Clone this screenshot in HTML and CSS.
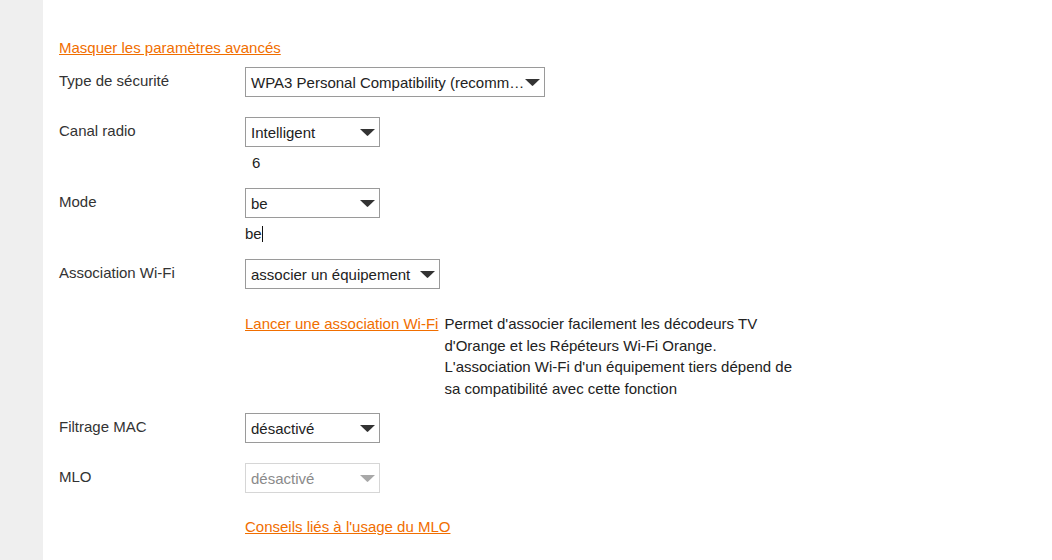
FILE: index.html
```html
<!DOCTYPE html>
<html lang="fr">
<head>
<meta charset="utf-8">
<title>Paramètres avancés</title>
<link rel="stylesheet" href="styles.css">
</head>
<body>
<div class="page">
  <aside class="side"></aside>
  <main class="content">
    <a class="link top-link" href="#">Masquer les paramètres avancés</a>

    <div class="row">
      <div class="label">Type de sécurité</div>
      <div class="ctrl">
        <div class="select w300"><span class="val">WPA3 Personal Compatibility (recomm…</span><svg class="arrow" viewBox="0 0 15 7"><path d="M0 0H15L8.2 6.6Q7.5 7.2 6.8 6.6Z"/></svg></div>
      </div>
    </div>

    <div class="row tight">
      <div class="label">Canal radio</div>
      <div class="ctrl">
        <div class="select w135"><span class="val">Intelligent</span><svg class="arrow" viewBox="0 0 15 7"><path d="M0 0H15L8.2 6.6Q7.5 7.2 6.8 6.6Z"/></svg></div>
        <div class="sub sub-indent">6</div>
      </div>
    </div>

    <div class="row tight">
      <div class="label">Mode</div>
      <div class="ctrl">
        <div class="select w135"><span class="val">be</span><svg class="arrow" viewBox="0 0 15 7"><path d="M0 0H15L8.2 6.6Q7.5 7.2 6.8 6.6Z"/></svg></div>
        <div class="sub">be<span class="caret"></span></div>
      </div>
    </div>

    <div class="row assoc">
      <div class="label">Association Wi-Fi</div>
      <div class="ctrl">
        <div class="select w195"><span class="val">associer un équipement</span><svg class="arrow" viewBox="0 0 15 7"><path d="M0 0H15L8.2 6.6Q7.5 7.2 6.8 6.6Z"/></svg></div>
      </div>
    </div>

    <div class="row info">
      <div class="label"></div>
      <div class="ctrl info-ctrl">
        <a class="link" href="#">Lancer une association Wi-Fi</a>
        <p class="desc">Permet d'associer facilement les décodeurs TV d'Orange et les Répéteurs Wi-Fi Orange.<br>L'association Wi-Fi d'un équipement tiers dépend de sa compatibilité avec cette fonction</p>
      </div>
    </div>

    <div class="row">
      <div class="label">Filtrage MAC</div>
      <div class="ctrl">
        <div class="select w135"><span class="val">désactivé</span><svg class="arrow" viewBox="0 0 15 7"><path d="M0 0H15L8.2 6.6Q7.5 7.2 6.8 6.6Z"/></svg></div>
      </div>
    </div>

    <div class="row mlo">
      <div class="label">MLO</div>
      <div class="ctrl">
        <div class="select w135 disabled"><span class="val">désactivé</span><svg class="arrow" viewBox="0 0 15 7"><path d="M0 0H15L8.2 6.6Q7.5 7.2 6.8 6.6Z"/></svg></div>
      </div>
    </div>

    <div class="row">
      <div class="label"></div>
      <div class="ctrl">
        <a class="link" href="#">Conseils liés à l'usage du MLO</a>
      </div>
    </div>
  </main>
</div>
</body>
</html>
```
FILE: styles.css
```css
html, body {
  margin: 0;
  padding: 0;
  background: #ffffff;
}
body {
  font-family: "Liberation Sans", Arial, sans-serif;
  font-size: 15px;
  color: #333333;
}
.page {
  display: flex;
  min-height: 560px;
}
.side {
  width: 43px;
  flex: 0 0 43px;
  background: #efefef;
}
.content {
  flex: 1;
  padding: 39px 0 0 16px;
}
.link {
  color: #f16e00;
  text-decoration: underline;
  line-height: 17px;
}
.top-link {
  display: inline-block;
  margin-bottom: 11px;
}
.row {
  display: grid;
  grid-template-columns: 186px 1fr;
  margin-bottom: 20px;
}
.row.tight {
  margin-bottom: 15px;
}
.row.assoc {
  margin-bottom: 24px;
}
.row.info {
  margin-bottom: 14px;
}
.row.mlo {
  margin-bottom: 25px;
}
.label {
  line-height: 17px;
  padding-top: 5px;
}
.ctrl {
  min-width: 0;
}
.select {
  box-sizing: border-box;
  height: 30px;
  border: 1px solid #9a9a9a;
  display: flex;
  align-items: center;
  padding: 0 4px 0 5px;
  gap: 4px;
  background: #fff;
}
.select .val {
  flex: 1;
  min-width: 0;
  white-space: nowrap;
  color: #222;
  padding-top: 1px;
}
.select .arrow {
  flex: 0 0 15px;
  width: 15px;
  height: 7px;
  fill: #333;
}
.w300 { width: 300px; }
.w135 { width: 135px; }
.w195 { width: 195px; }
.select.disabled {
  border-color: #d6d6d6;
}
.select.disabled .val {
  color: #8a8a8a;
}
.select.disabled .arrow {
  fill: #a8a8a8;
}
.sub {
  line-height: 20px;
  margin-top: 6px;
  color: #222;
}
.sub-indent {
  padding-left: 7px;
}
.caret {
  display: inline-block;
  width: 1px;
  height: 16px;
  background: #111;
  vertical-align: -3px;
}
.info-ctrl {
  display: flex;
  align-items: flex-start;
  gap: 6px;
}
.info-ctrl .link {
  line-height: 21.5px;
  white-space: nowrap;
}
.desc {
  margin: 0;
  width: 352px;
  line-height: 21.5px;
  color: #222;
}
```
